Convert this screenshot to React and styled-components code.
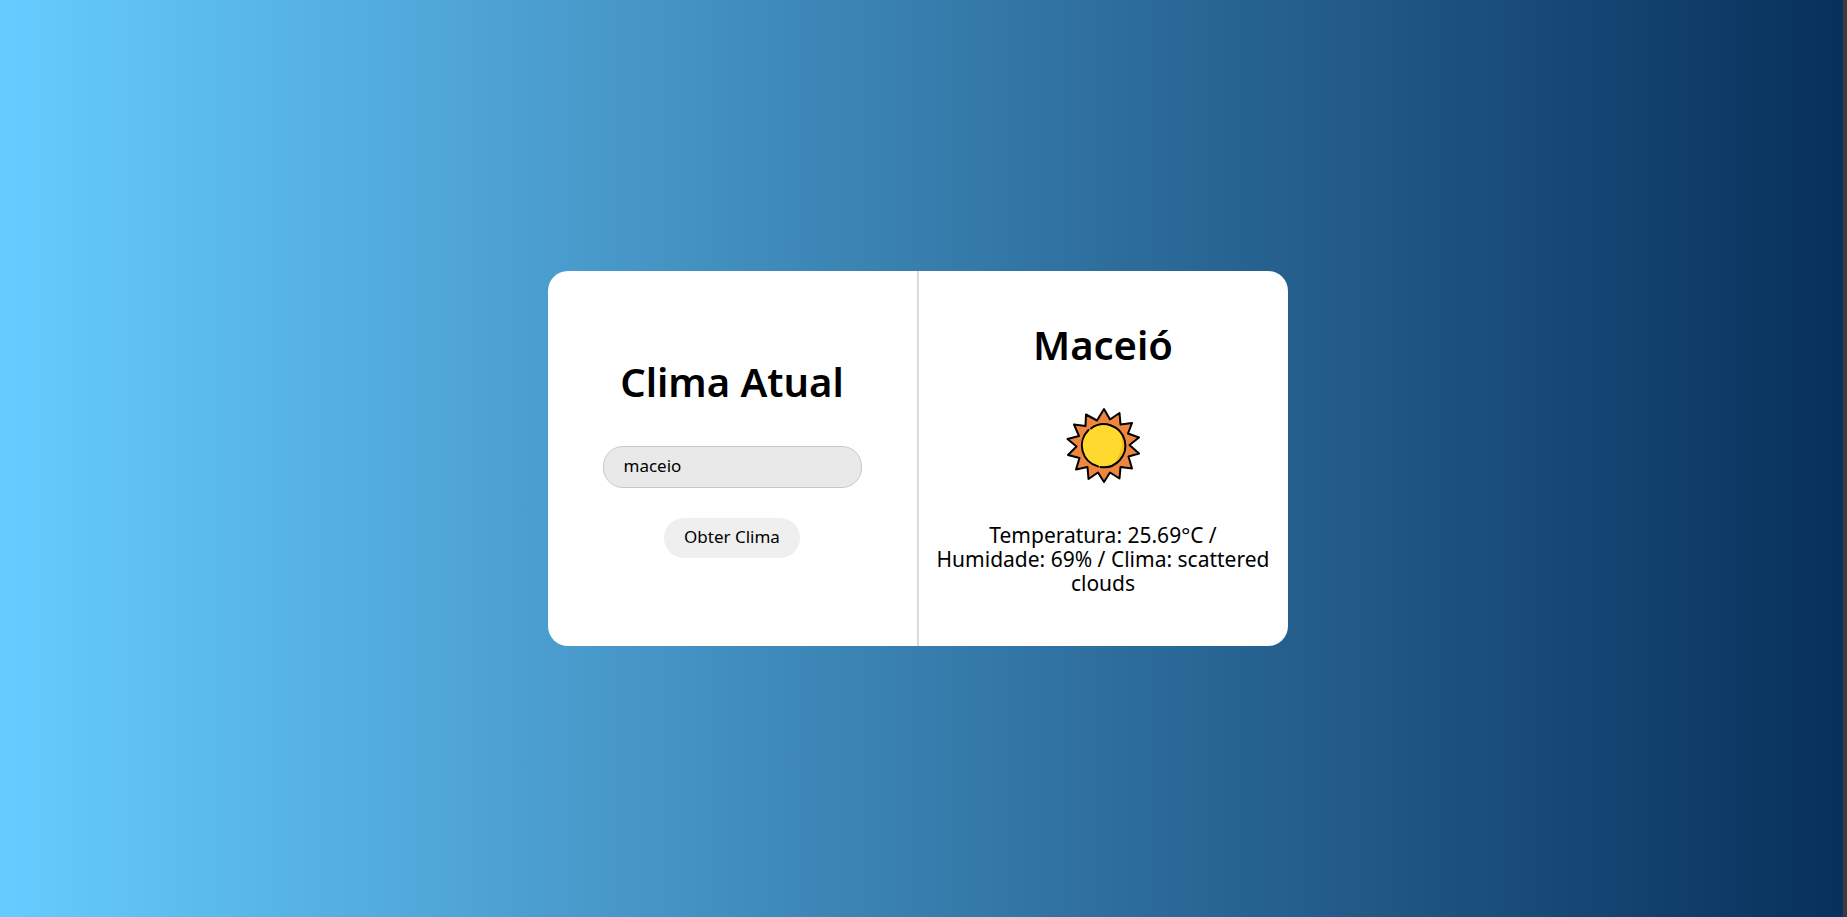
import React, { useState } from "react";
import styled, { createGlobalStyle } from "styled-components";

const GlobalStyle = createGlobalStyle`
  *, *::before, *::after { box-sizing: border-box; }
  body {
    margin: 0;
    font-family: "Noto Sans", "Lucida Sans", sans-serif;
    color: #000;
  }
`;

const Page = styled.main`
  display: flex;
  align-items: center;
  justify-content: center;
  min-height: 100vh;
  padding: 20px 8px 20px 0;
  border-right: 4px solid #3b3b3d;
  background: linear-gradient(90deg, #66ccff, #08305c);
`;

const Card = styled.div`
  display: flex;
  width: 100%;
  max-width: 740px;
  min-height: 375px;
  border-radius: 20px;
  background: #fff;
`;

const Panel = styled.section`
  display: flex;
  flex: 1 1 0;
  flex-direction: column;
  align-items: center;
  justify-content: center;
  min-width: 0;
  padding: 0 16px 2px;
  border-left: ${({ $divided }) => ($divided ? "2px solid #dadada" : "0")};
`;

const SearchForm = styled.form`
  display: flex;
  flex-direction: column;
  align-items: center;
  gap: 30px;
  width: 259px;
`;

const Title = styled.h1`
  margin: 0;
  font-size: 40px;
  font-weight: 600;
  line-height: 48px;
  white-space: nowrap;
`;

const CityInput = styled.input`
  width: 100%;
  height: 42px;
  margin-top: 10px;
  padding: 0 20px 2px;
  border: 1px solid #c8c8c8;
  border-radius: 20px;
  outline: none;
  background: #e9e9e9;
  color: inherit;
  font: 17px "Noto Sans", sans-serif;
`;

const SubmitButton = styled.button`
  height: 40px;
  padding: 0 20px 2px;
  border: 0;
  border-radius: 20px;
  background: #efefef;
  color: inherit;
  font: 17px "Noto Sans", sans-serif;
  white-space: nowrap;
  cursor: pointer;
`;

const SunIcon = styled.svg`
  width: 80px;
  height: 80px;
  margin: 36px 0 38px;
`;

const Report = styled.p`
  margin: 0;
  font-size: 21px;
  line-height: 24px;
  text-align: center;
`;

function Sun() {
  return (
    <SunIcon viewBox="-1 0 80 80" aria-hidden="true">
      <path
        d="M40 4 L46 14.500 L55.500 8 L56.500 19.500 L68 18 L64 28.500 L75 32.500 L65.500 40 L75 48.500 L64.500 51.500 L68 63.500 L56.500 62 L55.500 73.500 L46 67.500 L40 77 L34 67.500 L24.500 74 L23.500 62 L12 64.500 L15.500 53 L4 50 L12.500 41.500 L3.500 34 L15 31 L10 19.500 L21.500 21 L22 9.500 L33 15.500 Z"
        fill="#ee8640"
        stroke="#000"
        strokeWidth="2"
        strokeLinejoin="round"
      />
      <circle cx="39.500" cy="40.500" r="21" fill="#ffd92e" />
      <path d="M57 27 A22 22 0 0 1 50 58 Q61 45 57 27 Z" fill="#fcbd18" />
      <path
        d="M27 23.500 A21.500 21.500 0 1 1 36.500 62 M34 61.400 A21.500 21.500 0 0 1 24.500 25"
        fill="none"
        stroke="#000"
        strokeWidth="2"
        strokeLinecap="round"
      />
    </SunIcon>
  );
}

export default function App() {
  const [city, setCity] = useState("maceio");

  return (
    <>
      <GlobalStyle />
      <Page>
        <Card>
          <Panel>
            <SearchForm onSubmit={(event) => event.preventDefault()}>
              <Title>Clima Atual</Title>
              <CityInput
                type="text"
                aria-label="Cidade"
                value={city}
                onChange={(event) => setCity(event.target.value)}
              />
              <SubmitButton type="submit">Obter Clima</SubmitButton>
            </SearchForm>
          </Panel>
          <Panel $divided>
            <Title as="h2">Maceió</Title>
            <Sun />
            <Report>Temperatura: 25.69°C / Humidade: 69% / Clima: scattered clouds</Report>
          </Panel>
        </Card>
      </Page>
    </>
  );
}
